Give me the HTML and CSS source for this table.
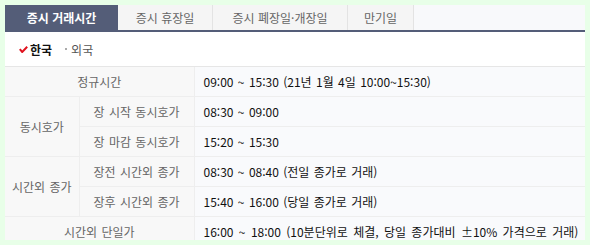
FILE: index.html
```html
<!DOCTYPE html>
<html lang="ko">
<head>
<meta charset="utf-8">
<link rel="stylesheet" href="styles.css">
</head>
<body>
<div class="panel">
  <ul class="tabs">
    <li class="tab active">증시 거래시간</li>
    <li class="tab w95">증시 휴장일</li>
    <li class="tab w135">증시 폐장일·개장일</li>
    <li class="tab w66">만기일</li>
    <li class="tab-rest"></li>
  </ul>
  <div class="region">
    <span class="opt on"><svg class="check" width="9" height="7" viewBox="0 0 9 7"><path d="M0.8 3.2 L3.2 6 L8.2 0.8" fill="none" stroke="#e0121e" stroke-width="2"/></svg>한국</span>
    <span class="opt"><span class="dot"></span>외국</span>
  </div>
  <table class="hours">
    <colgroup><col class="c1"><col class="c2"><col></colgroup>
    <tr><th colspan="2">정규시간</th><td>09:00 ~ 15:30 (21년 1월 4일 10:00~15:30)</td></tr>
    <tr><th rowspan="2">동시호가</th><th>장 시작 동시호가</th><td>08:30 ~ 09:00</td></tr>
    <tr><th>장 마감 동시호가</th><td>15:20 ~ 15:30</td></tr>
    <tr><th rowspan="2">시간외 종가</th><th>장전 시간외 종가</th><td>08:30 ~ 08:40 (전일 종가로 거래)</td></tr>
    <tr><th>장후 시간외 종가</th><td>15:40 ~ 16:00 (당일 종가로 거래)</td></tr>
    <tr><th colspan="2">시간외 단일가</th><td class="wide">16:00 ~ 18:00 (10분단위로 체결, 당일 종가대비 ±10% 가격으로 거래)</td></tr>
  </table>
</div>
</body>
</html>
```

FILE: styles.css
```css
html, body {
  margin: 0;
  padding: 0;
}
body {
  background: #e8ffe8;
  padding: 5px;
  font-family: "Noto Sans CJK KR", "Liberation Sans", sans-serif;
  font-size: 12px;
}
.panel {
  width: 580px;
  height: 235px;
  overflow: hidden;
  background: #fff;
}
.tabs {
  display: flex;
  list-style: none;
  margin: 0;
  padding: 0;
  height: 25px;
  border-bottom: 2px solid #545d78;
  background: #f8f9fb;
}
.tab {
  height: 25px;
  line-height: 25px;
  text-align: center;
  color: #666;
  background: #f5f5f5;
  border-right: 1px solid #e3e3e3;
  box-sizing: border-box;
}
.tab.active {
  width: 113px;
  background: #545d78;
  color: #fff;
  font-weight: bold;
  border-right: none;
}
.w95 { width: 95px; }
.w135 { width: 135px; }
.w66 { width: 66px; }
.tab-rest { flex: 1; }
.region {
  height: 34px;
  display: flex;
  align-items: center;
  padding-left: 14px;
  gap: 13px;
  border-bottom: 1px solid #e6e6e6;
}
.opt {
  display: flex;
  align-items: center;
  color: #555;
}
.opt.on {
  color: #111;
  font-weight: bold;
}
.check { margin-right: 2px; }
.dot {
  width: 2px;
  height: 2px;
  background: #aaa;
  margin-right: 4px;
}
.hours {
  width: 580px;
  border-collapse: collapse;
  table-layout: fixed;
}
.c1 { width: 74px; }
.c2 { width: 115px; }
.hours th, .hours td {
  height: 29px;
  padding: 0;
  border-bottom: 1px solid #eeeeee;
  border-right: 1px solid #eeeeee;
  font-weight: normal;
  white-space: nowrap;
}
.hours th {
  background: #f8f8f8;
  color: #666;
  text-align: center;
  word-spacing: 1px;
}
.hours td {
  background: #f9fafc;
  color: #111;
  padding-left: 9px;
  border-right: none;
  word-spacing: 1px;
}
.hours td.wide {
  word-spacing: 2px;
}
```
